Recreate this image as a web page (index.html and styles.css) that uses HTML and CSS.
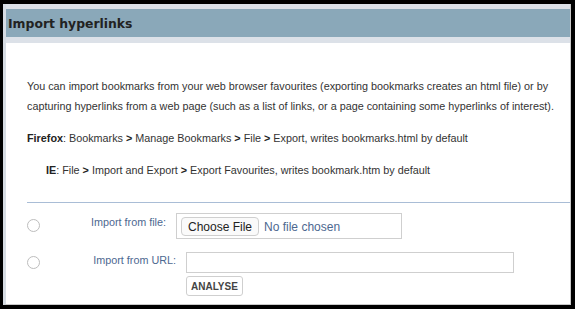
FILE: index.html
```html
<!DOCTYPE html>
<html lang="en">
<head>
  <meta charset="UTF-8" />
  <title>Import hyperlinks</title>
  <link rel="stylesheet" href="styles.css">
</head>
<body>
  <div class="window">
    <div class="title-bar">
      <h1>Import hyperlinks</h1>
    </div>

    <div class="content">
      <p class="intro">You can import bookmarks from your web browser favourites (exporting bookmarks creates an html file) or by capturing hyperlinks from a web page (such as a list of links, or a page containing some hyperlinks of interest).</p>

      <p class="browser"><b>Firefox</b>: Bookmarks <b class="sep">&gt;</b> Manage Bookmarks <b class="sep">&gt;</b> File <b class="sep">&gt;</b> Export, writes bookmarks.html by default</p>

      <p class="browser indent"><b>IE</b>: File <b class="sep">&gt;</b> Import and Export <b class="sep">&gt;</b> Export Favourites, writes bookmark.htm by default</p>

      <hr class="divider">

      <div class="import-row">
        <input type="radio" name="source" class="radio file-radio">
        <label class="row-label">Import from file:</label>
        <input type="file" class="file-input">
      </div>

      <div class="import-row">
        <input type="radio" name="source" class="radio url-radio">
        <label class="row-label url-label">Import from URL:</label>
        <div class="url-box">
          <input type="text" class="url-input">
          <button class="analyse">ANALYSE</button>
        </div>
      </div>
    </div>
  </div>
</body>
</html>
```

FILE: styles.css
```css
body {
  margin: 0;
  background: #000;
  height: 309px;
  overflow: hidden;
  font-family: "Liberation Sans", Arial, sans-serif;
  color: #333;
}
.window {
  margin: 4px 4px 0 3px;
  height: 300px;
  background: #fff;
  border-left: 3px solid #d6dce3;
  border-right: 1px solid #c9c9c9;
  border-bottom: 1px solid #c9c9c9;
}
.title-bar {
  height: 28px;
  background: #8aa8b9;
  border-top: 5px solid #dce1e8;
  border-bottom: 6px solid #dce1e8;
  display: flex;
  align-items: center;
  padding-left: 2px;
}
.title-bar h1 {
  margin: 0;
  font-family: "DejaVu Sans", Verdana, sans-serif;
  font-size: 12.4px;
  font-weight: bold;
  color: #222;
}
.content {
  padding: 0 0 0 21px;
}
.intro {
  margin: 33px 0 0;
  font-size: 10.8px;
  line-height: 20px;
}
.browser {
  margin: 12px 0 0;
  font-size: 10.8px;
  line-height: 20px;
}
.browser b {
  color: #222;
}
.indent {
  padding-left: 19px;
}
.divider {
  margin: 22px 0 0;
  border: 0;
  border-top: 1px solid #a9bdd6;
}
.import-row {
  display: flex;
  align-items: flex-start;
  margin-top: 10px;
}
.import-row + .import-row {
  margin-top: 13px;
}
.radio {
  appearance: none;
  width: 13px;
  height: 13px;
  margin: 6px 0 0;
  border: 1px solid #bdbdbd;
  border-radius: 50%;
  background: #fff;
  box-sizing: border-box;
}
.url-radio {
  margin-top: 4px;
}
.row-label {
  width: 126px;
  margin-right: 10px;
  padding-top: 2px;
  text-align: right;
  font-size: 10.8px;
  line-height: 14px;
  color: #4d6890;
}
.url-label {
  width: 136px;
  padding-top: 1px;
}
.file-input {
  width: 226px;
  height: 26px;
  box-sizing: border-box;
  margin: 0;
  padding: 3px 4px;
  border: 1px solid #cfcfcf;
  font-family: "Liberation Sans", Arial, sans-serif;
  font-size: 12px;
  color: #4d6890;
}
.file-input::file-selector-button {
  font-family: "Liberation Sans", Arial, sans-serif;
  font-size: 12px;
  color: #222;
  height: 19px;
  padding: 0 6px;
  margin-right: 5px;
  border: 1px solid #cfcfcf;
  border-radius: 4px;
  background: #fafafa;
}
.url-box {
  display: flex;
  flex-direction: column;
  align-items: flex-start;
}
.url-input {
  width: 328px;
  height: 21px;
  box-sizing: border-box;
  margin: 0;
  border: 1px solid #cfcfcf;
}
.analyse {
  margin-top: 3px;
  height: 20px;
  padding: 0 4px;
  border: 1px solid #cfcfcf;
  border-radius: 3px;
  background: #fff;
  font-family: "Liberation Sans", Arial, sans-serif;
  font-size: 10px;
  font-weight: bold;
  color: #444;
}
```
